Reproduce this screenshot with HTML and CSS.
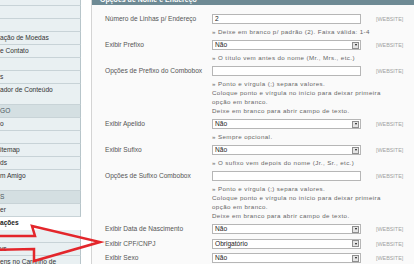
FILE: index.html
```html
<!DOCTYPE html>
<html lang="pt-BR">
<head>
<meta charset="utf-8">
<title>Opções de Nome e Endereço</title>
<link rel="stylesheet" href="styles.css">
</head>
<body>
<div class="page">
  <ul class="side">
    <li class="tab first"></li>
    <li class="tab"></li>
    <li class="tab"></li>
    <li class="tab">ação de Moedas</li>
    <li class="tab">e Contato</li>
    <li class="tab"></li>
    <li class="tab">s</li>
    <li class="tab tall">ador de Conteúdo</li>
    <li class="group">GO</li>
    <li class="tab">o</li>
    <li class="tab"></li>
    <li class="tab">itemap</li>
    <li class="tab">ds</li>
    <li class="tab tall">m Amigo</li>
    <li class="group">S</li>
    <li class="tab">er</li>
    <li class="tab active">ações</li>
    <li class="tab"></li>
    <li class="tab">vs</li>
    <li class="tab">ens no Carrinho de</li>
  </ul>

  <section class="panel">
    <h2 class="panel-head"><span>Opções de Nome e Endereço</span></h2>
    <div class="form">
      <div class="row">
        <div class="label">Número de Linhas p/ Endereço</div>
        <div class="control">
          <div class="input">2</div>
          <p class="note">» Deixe em branco p/ padrão (2). Faixa válida: 1-4</p>
        </div>
        <div class="scope">[WEBSITE]</div>
      </div>
      <div class="row">
        <div class="label">Exibir Prefixo</div>
        <div class="control">
          <div class="input select">Não<span class="select-btn"></span></div>
          <p class="note">» O título vem antes do nome (Mr., Mrs., etc.)</p>
        </div>
        <div class="scope">[WEBSITE]</div>
      </div>
      <div class="row">
        <div class="label">Opções de Prefixo do Combobox</div>
        <div class="control">
          <div class="input"></div>
          <p class="note">» Ponto e vírgula (;) separa valores.<br>Coloque ponto e vírgula no início para deixar primeira<br>opção em branco.<br>Deixe em branco para abrir campo de texto.</p>
        </div>
        <div class="scope">[WEBSITE]</div>
      </div>
      <div class="row">
        <div class="label">Exibir Apelido</div>
        <div class="control">
          <div class="input select">Não<span class="select-btn"></span></div>
          <p class="note">» Sempre opcional.</p>
        </div>
        <div class="scope">[WEBSITE]</div>
      </div>
      <div class="row">
        <div class="label">Exibir Sufixo</div>
        <div class="control">
          <div class="input select">Não<span class="select-btn"></span></div>
          <p class="note">» O sufixo vem depois do nome (Jr., Sr., etc.)</p>
        </div>
        <div class="scope">[WEBSITE]</div>
      </div>
      <div class="row">
        <div class="label">Opções de Sufixo Combobox</div>
        <div class="control">
          <div class="input"></div>
          <p class="note">» Ponto e vírgula (;) separa valores.<br>Coloque ponto e vírgula no início para deixar primeira<br>opção em branco.<br>Deixe em branco para abrir campo de texto.</p>
        </div>
        <div class="scope">[WEBSITE]</div>
      </div>
      <div class="row">
        <div class="label">Exibir Data de Nascimento</div>
        <div class="control">
          <div class="input select">Não<span class="select-btn"></span></div>
        </div>
        <div class="scope">[WEBSITE]</div>
      </div>
      <div class="row">
        <div class="label">Exibir CPF/CNPJ</div>
        <div class="control">
          <div class="input select">Obrigatório<span class="select-btn"></span></div>
        </div>
        <div class="scope">[WEBSITE]</div>
      </div>
      <div class="row">
        <div class="label">Exibir Sexo</div>
        <div class="control">
          <div class="input select">Não<span class="select-btn"></span></div>
        </div>
        <div class="scope">[WEBSITE]</div>
      </div>
    </div>
  </section>
</div>

<svg class="arrow" width="414" height="264" viewBox="0 0 414 264" aria-hidden="true">
  <polygon points="-6,236 35,236 32,226 100,242 34,261 34,249 -6,250" fill="none" stroke="#e3262b" stroke-width="2.5" stroke-linejoin="miter"/>
</svg>
</body>
</html>
```

FILE: styles.css
```css
* {
  box-sizing: border-box;
  margin: 0;
  padding: 0;
}

html,
body {
  width: 414px;
  height: 264px;
  overflow: hidden;
  background: #fff;
}

body {
  position: relative;
  font-family: "Liberation Sans", Arial, sans-serif;
  color: #333;
}

.page {
  display: flex;
  gap: 10px;
  align-items: flex-start;
}

/* ---------- sidebar tabs ---------- */
.side {
  list-style: none;
  width: 81px;
  flex: none;
  font-size: 6.6px;
}

.tab,
.group {
  height: 13px;
  line-height: 12px;
  white-space: nowrap;
  overflow: hidden;
  border-bottom: 1px solid #c8d3d7;
  border-right: 1px solid #b7c5ca;
}

.tab {
  background: #e9f0f2;
  color: #333;
}

.tab.first {
  height: 6px;
}

.tab.tall {
  height: 21px;
}

.group {
  background: #d4dfe2;
  color: #4b595e;
}

.tab.active {
  width: 91px;
  background: #fff;
  border-right-color: transparent;
  border-bottom-color: transparent;
  box-shadow: inset -10px -1px 0 #fff, inset 0 -1px 0 #c8d3d7;
  font-weight: bold;
  color: #1b1b1b;
}

/* ---------- main panel ---------- */
.panel {
  flex: none;
  width: 340px;
  height: 264px;
  background: #fafafa;
  border-left: 1px solid #d4d4d4;
}

.panel-head {
  height: 5px;
  overflow: hidden;
  background: #6e8a94;
  color: #fff;
  font-size: 7px;
  font-weight: bold;
  line-height: 12px;
  padding-left: 8px;
}

.panel-head span {
  display: block;
  margin-top: -6px;
}

.form {
  padding: 7px 0 0 13px;
}

.row {
  display: grid;
  grid-template-columns: 107px 149px 15px auto;
  align-items: start;
  padding: 2px 0 2.5px;
}

.label {
  font-size: 6.6px;
  line-height: 10px;
  color: #555;
  white-space: nowrap;
}

.input {
  height: 10px;
  display: flex;
  align-items: center;
  justify-content: space-between;
  padding-left: 2px;
  background: #fff;
  border: 1px solid #b6b6b6;
  font-size: 6.6px;
  line-height: 8px;
  color: #222;
}

.select-btn {
  width: 7px;
  height: 7px;
  margin-right: 1px;
  display: flex;
  align-items: center;
  justify-content: center;
  background: #e4e4e4;
  border: 1px solid #8f8f8f;
}

.select-btn::before {
  content: "";
  border-left: 1.5px solid transparent;
  border-right: 1.5px solid transparent;
  border-top: 2px solid #111;
}

.note {
  margin-top: 2.5px;
  font-size: 6.2px;
  letter-spacing: 0.4px;
  line-height: 9px;
  color: #666;
  white-space: nowrap;
}

.scope {
  grid-column: 4;
  font-size: 5.4px;
  line-height: 10px;
  color: #a2a2a2;
}

/* ---------- annotation arrow ---------- */
.arrow {
  position: absolute;
  left: 0;
  top: 0;
  pointer-events: none;
}
```
